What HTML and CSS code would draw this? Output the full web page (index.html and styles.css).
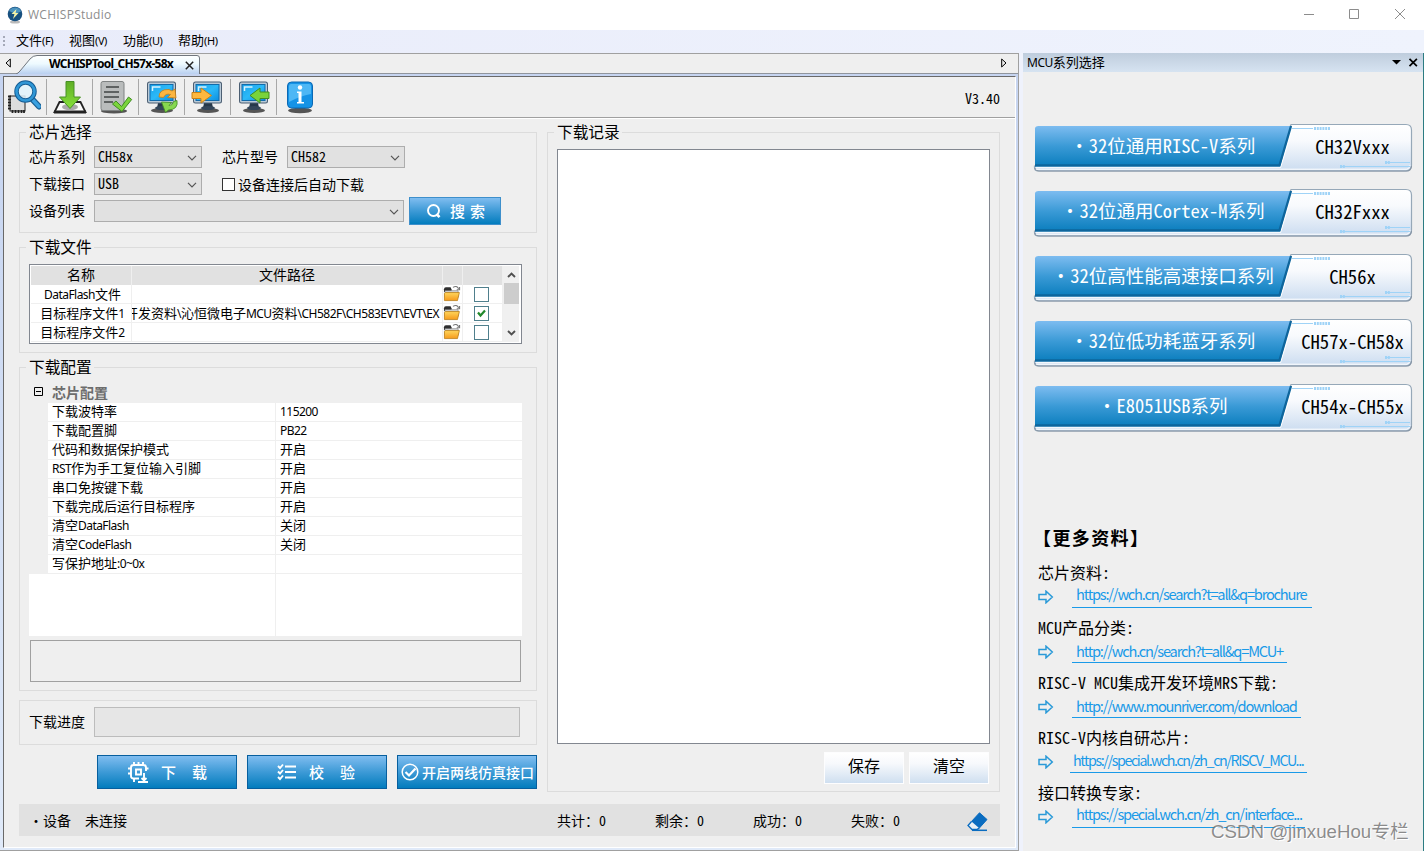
FILE: index.html
```html
<!DOCTYPE html>
<html lang="zh-CN">
<head>
<meta charset="utf-8">
<title>WCHISPStudio</title>
<link rel="stylesheet" href="styles.css">
</head>
<body>
<svg class="defs" width="0" height="0" aria-hidden="true">
  <defs>
    <linearGradient id="blue" x1="0" y1="0" x2="0" y2="1"><stop offset="0" stop-color="#7dbcf0"/><stop offset=".5" stop-color="#3a9ad6"/><stop offset="1" stop-color="#0a7dbd"/></linearGradient>
    <linearGradient id="plate" x1="0" y1="0" x2="0" y2="1"><stop offset="0" stop-color="#ffffff"/><stop offset=".35" stop-color="#f8fafd"/><stop offset="1" stop-color="#cbdcf0"/></linearGradient>
    <linearGradient id="screen" x1="0" y1="0" x2="1" y2="1"><stop offset="0" stop-color="#1aa3ea"/><stop offset=".5" stop-color="#2cb9f8"/><stop offset="1" stop-color="#0b8fe0"/></linearGradient>
    <linearGradient id="green" x1="0" y1="0" x2="0" y2="1"><stop offset="0" stop-color="#5fae25"/><stop offset="1" stop-color="#86e03a"/></linearGradient>
    <linearGradient id="tab" x1="0" y1="0" x2="0" y2="1"><stop offset="0" stop-color="#ffffff"/><stop offset=".45" stop-color="#edfaff"/><stop offset="1" stop-color="#b9d0f0"/></linearGradient>
    <linearGradient id="folder" x1="0" y1="0" x2="0" y2="1"><stop offset="0" stop-color="#ffd65c"/><stop offset="1" stop-color="#f59a1c"/></linearGradient>
    <symbol id="monitor" viewBox="0 0 34 34">
      <ellipse cx="17" cy="30.5" rx="11" ry="2.6" fill="#555"/>
      <path d="M13 23h8l1 5H12z" fill="#26384a"/>
      <ellipse cx="17" cy="28" rx="7" ry="2" fill="#34465a"/>
      <rect x="2" y="1.5" width="29" height="22" rx="2.5" fill="#4c5f73"/>
      <rect x="3" y="2.500" width="27" height="20" rx="1.500" fill="#b9cad8"/>
      <rect x="5" y="4.500" width="23" height="16" fill="url(#screen)" stroke="#126bab"/>
      <path d="M7.500 11V7h8" fill="none" stroke="#d8f4ff" stroke-width="1.500"/>
    </symbol>
    <symbol id="open" viewBox="0 0 19 18">
      <path d="M1 4.500q0-2 2-2h5l1 2v3H1z" fill="#2f2f2f"/>
      <path d="M2 6h14v7H2z" fill="#d5d5d5" stroke="#777" stroke-width=".6"/>
      <path d="M10.500 2.500q4-2.500 6 1.500M17.500 2v3h-3" fill="none" stroke="#777" stroke-width="1.200"/>
      <path d="M1.500 16.500V9l1-1h14.800l-2 8.500z" fill="url(#folder)" stroke="#b77a10" stroke-width=".8"/>
    </symbol>
    <symbol id="pill" viewBox="0 0 380 50">
      <path d="M258 1.500H373Q378.500 1.500 378.500 7V42Q378.500 48 373 48H5Q1.500 48 1.500 44.500V43H246z" fill="url(#plate)" stroke="#96a8b8" stroke-width="1.200"/>
      <path d="M1.500 45q2 3 4.500 3H373q5 0 5.500-5" fill="none" stroke="#8796a6" stroke-width="1.200"/>
      <path d="M3 46.200H374q3-1 3-4" fill="none" stroke="#fff" stroke-width="1"/>
      <path d="M3 44H247.500L260 3" fill="none" stroke="#fff" stroke-width="1.300"/>
      <path d="M2 5.500Q2 3 5.500 3H258.500L247 43.500H2z" fill="url(#blue)"/>
      <path d="M2 42.300H246.500L258 3" fill="none" stroke="#0e659c" stroke-width="2.300"/>
      <path d="M259 5.500H280M308 43.500H377M353 39.500H377" stroke="#9fd3f7" stroke-width="1"/>
      <path d="M281 5.500h16M307 43.500h5M352 39.500h5" stroke="#9fd3f7" stroke-width="3" stroke-dasharray="2 .8"/>
    </symbol>
    <symbol id="arrow" viewBox="0 0 16 14"><path d="M1 4.500H8V1.200L14.300 7 8 12.800V9.500H1z" fill="none" stroke="#2a9ad8" stroke-width="1.500"/></symbol>
    <symbol id="chev" viewBox="0 0 10 6"><path d="M1 .8 5 4.800 9 .8" fill="none" stroke="#555" stroke-width="1.200"/></symbol>
  </defs>
</svg>

<div class="window">
  <header class="titlebar">
    <svg class="appicon" viewBox="0 0 16 18"><ellipse cx="8" cy="16" rx="5" ry="1.500" fill="#bbb"/><circle cx="8" cy="8" r="7.300" fill="#17507f"/><path d="M2 5Q4 1 9 1.500q4 .5 5 4Q8 9 2 5z" fill="#4b93bf"/><path d="M9.500 3 4.500 8h3L6 13l5.500-6H8.500z" fill="#f4f3a8"/></svg>
    <span class="apptitle">WCHISPStudio</span>
    <svg class="winbtns" width="102" height="12" viewBox="0 0 102 12" fill="none" stroke="#8c8c8c"><path d="M0 5.500h10M45.500.5h9v9h-9zM91 0l10 10M101 0 91 10"/></svg>
  </header>

  <nav class="menubar">
    <i class="grip"></i>
    <span class="menu m1">文件<small>(F)</small></span>
    <span class="menu m2">视图<small>(V)</small></span>
    <span class="menu m3">功能<small>(U)</small></span>
    <span class="menu m4">帮助<small>(H)</small></span>
  </nav>

  <div class="work">
    <main class="dock">
      <div class="tabs">
        <svg class="tprev" width="6" height="10" viewBox="0 0 6 10"><path d="M5.300 1v8L1 5z" fill="none" stroke="#000"/></svg>
        <div class="tab">
          <svg class="tabshape" width="184" height="19" viewBox="0 0 184 19"><path d="M0 19Q2 18.500 4 16L14 4Q17 .5 21 .5H181Q183.500.5 183.500 3V19" fill="url(#tab)" stroke="#70767e"/></svg>
          <b>WCHISPTool_CH57x-58x</b>
          <svg class="tclose" width="9" height="9" viewBox="0 0 9 9"><path d="M.8.8l7.400 7.400M8.200.8.800 8.200" stroke="#222" stroke-width="1.500"/></svg>
        </div>
        <svg class="tnext" width="6" height="10" viewBox="0 0 6 10"><path d="M.7 1v8L5 5z" fill="none" stroke="#000"/></svg>
      </div>

      <div class="frame"><div class="page">
        <div class="toolbar">
          <span class="tool"><svg viewBox="0 0 34 34"><rect x="3" y="16" width="15" height="15" fill="#ddd" stroke="#222" stroke-width="1"/><path d="M1 16.500h3M1 19.500h3M1 22.500h3M1 25.500h3M1 28.500h3M5.500 30v3M8.500 30v3M11.500 30v3M14.500 30v3M17 30v3" stroke="#222" stroke-width="1.800"/><path d="M25 19l7 7.500" stroke="#1a5f93" stroke-width="6" stroke-linecap="round"/><path d="M25 19l7 7.500" stroke="#3aa0e0" stroke-width="3.500" stroke-linecap="round"/><circle cx="18.500" cy="11.500" r="9" fill="#dff3fb" fill-opacity=".85" stroke="#175e95" stroke-width="4.500"/><circle cx="18.500" cy="11.500" r="9" fill="none" stroke="#2f97d6" stroke-width="2.600"/></svg></span>
          <span class="tool"><svg viewBox="0 0 34 34"><path d="M6.500 22h21l5 10h-31z" fill="#fafafa" stroke="#222" stroke-width="1.800"/><path d="M1 30.500h32v3H1z" fill="#222"/><ellipse cx="17" cy="27" rx="8" ry="3.300" fill="#aaa"/><path d="M13 1.500h8V17h6.500L17 28.500 6.500 17H13z" fill="url(#green)" stroke="#479026"/></svg></span>
          <span class="tool"><svg viewBox="0 0 34 34"><ellipse cx="15" cy="31" rx="13" ry="2.500" fill="#555"/><rect x="2" y="1.500" width="23" height="29" rx="2" fill="#b9bcbc" stroke="#7e8282"/><path d="M7 7h13M5 12h15M5 17h15M5 22h9" stroke="#5e6262" stroke-width="1.800"/><path d="M13.500 24l3.500-3 5.500 5.500L29.500 17l3.200 2.500L23 31.500z" fill="#7bd43c" stroke="#3f8c22"/></svg></span>
          <span class="tool"><svg viewBox="0 0 34 34"><use href="#monitor"/><path d="M14 17q0-8 10-7.500l3 1.500 3-2 1 9-8.500-.5 3-3q-5-1.500-7 3z" fill="#fbb541" stroke="#c57d14" stroke-width=".8"/><path d="M32 20.500q1.500 9-8.500 9.500l-3 2.500-4-10.500 10 .5-2.500 3q4 0 4.500-4z" fill="#86d850" stroke="#3f8c22" stroke-width=".8"/></svg></span>
          <span class="tool"><svg viewBox="0 0 34 34"><use href="#monitor"/><path d="M1 12.500h9V8l10.500 7.500L10 23v-4.500H1z" fill="#fdb83f" stroke="#c98216"/></svg></span>
          <span class="tool"><svg viewBox="0 0 34 34"><use href="#monitor"/><path d="M32 12h-9V8l-10 7.500L23 23v-4.500h9z" fill="#79d33b" stroke="#3f8c22"/></svg></span>
          <span class="tool last"><svg viewBox="0 0 34 34"><ellipse cx="17" cy="30.500" rx="12" ry="2.800" fill="#555"/><rect x="4.500" y="2" width="25" height="26" rx="4" fill="#1593e6" stroke="#0b68b3"/><path d="M6 6q0-2 2-2h18q2 0 2 2v8Q17 16 6 22z" fill="#4db7f5"/><circle cx="17" cy="7.500" r="2.200" fill="#fff"/><path d="M14 11.500h4.500V22H21v1.500h-7V22h1.500v-9H14z" fill="#fff"/></svg></span>
          <span class="version hei">V3.40</span>
        </div>

        <div class="columns">
          <div class="left">
            <section class="group g-chip">
              <h2 class="legend">芯片选择</h2>
              <div class="formrow">
                <label class="hei">芯片系列</label><span class="select s1 hei">CH58x<svg><use href="#chev"/></svg></span>
                <label class="hei second">芯片型号</label><span class="select s2 hei">CH582<svg><use href="#chev"/></svg></span>
              </div>
              <div class="formrow">
                <label class="hei">下载接口</label><span class="select s1 hei">USB<svg><use href="#chev"/></svg></span>
                <i class="check"></i><span class="hei checktext">设备连接后自动下载</span>
              </div>
              <div class="formrow">
                <label class="hei">设备列表</label><span class="select s3"><svg><use href="#chev"/></svg></span>
                <button class="btn search"><svg width="16" height="16" viewBox="0 0 16 16" fill="none" stroke="#fff"><circle cx="7.500" cy="7.500" r="5.500" stroke-width="1.900"/><path d="M10.500 11l3 3.200" stroke-width="2.600"/></svg><span>搜 索</span></button>
              </div>
            </section>

            <section class="group g-file">
              <h2 class="legend">下载文件</h2>
              <div class="filebox">
                <div class="filegrid">
                  <div class="fr head"><span class="hei">名称</span><span class="hei">文件路径</span><span></span><span></span></div>
                  <div class="fr"><span class="name"><em class="df">DataFlash</em>文件</span><span></span><span><svg class="open"><use href="#open"/></svg></span><span><i class="cb"></i></span></div>
                  <div class="fr"><span class="name">目标程序文件<em>1</em></span><span class="path"><span class="pathtext">开发资料<em>\</em>沁恒微电子<em>MCU</em>资料<em class="tail">\CH582F\CH583EVT\EVT\EX</em></span></span><span><svg class="open"><use href="#open"/></svg></span><span><i class="cb"><svg width="9" height="9" viewBox="0 0 9 9"><path d="M1 3.500 3.500 6.500 8 1.500" fill="none" stroke="#22892c" stroke-width="2.200"/></svg></i></span></div>
                  <div class="fr"><span class="name">目标程序文件<em>2</em></span><span></span><span><svg class="open"><use href="#open"/></svg></span><span><i class="cb"></i></span></div>
                </div>
                <div class="scroll"><svg width="9" height="6" viewBox="0 0 9 6"><path d="M1 5 4.500 1.500 8 5" fill="none" stroke="#505050" stroke-width="1.900"/></svg><i></i><svg width="9" height="6" viewBox="0 0 9 6"><path d="M1 1 4.500 4.500 8 1" fill="none" stroke="#505050" stroke-width="1.900"/></svg></div>
              </div>
            </section>

            <section class="group g-conf">
              <h2 class="legend">下载配置</h2>
              <div class="props">
                <div class="cat"><svg width="9" height="9" viewBox="0 0 9 9"><path d="M.5.5h8v8h-8zM2 4.500h5" fill="none" stroke="#000"/></svg><b>芯片配置</b></div>
                <div class="prop"><span>下载波特率</span><span><em>115200</em></span></div>
                <div class="prop"><span>下载配置脚</span><span><em>PB22</em></span></div>
                <div class="prop"><span>代码和数据保护模式</span><span>开启</span></div>
                <div class="prop"><span><em>RST</em>作为手工复位输入引脚</span><span>开启</span></div>
                <div class="prop"><span>串口免按键下载</span><span>开启</span></div>
                <div class="prop"><span>下载完成后运行目标程序</span><span>开启</span></div>
                <div class="prop"><span>清空<em>DataFlash</em></span><span>关闭</span></div>
                <div class="prop"><span>清空<em>CodeFlash</em></span><span>关闭</span></div>
                <div class="prop"><span>写保护地址<em>:0~0x</em></span><span></span></div>
                <div class="propblank"></div>
              </div>
              <div class="desc"></div>
            </section>

            <section class="group g-prog"><label class="hei">下载进度</label><div class="progress"></div></section>

            <div class="actions">
              <button class="btn a1"><svg width="22" height="22" viewBox="0 0 22 22" fill="none" stroke="#fff" stroke-width="1.900"><path d="M19 10V6.500q0-2.500-2.500-2.500h-10Q4 4 4 6.500v8.500Q4 17.500 6.500 17.500H12M7 4V1M11.500 4V1M16 4V1M4 7.500H1M4 12.500H1M19 7.500h2.500M7 18v3M11 21h10M17 12v8M14.500 17l2.500 2.500 2.500-2.500M9 8.500h5v5H9z"/></svg><span>下<u></u>载</span></button>
              <button class="btn a2"><svg width="20" height="18" viewBox="0 0 20 18" fill="none" stroke="#fff" stroke-width="1.900"><path d="M8 3.500h11M8 9h11M8 14.500h11M1 3l2 2 3-3.500M1 8.500l2 2L6 7M1 14l2 2 3-3.500"/></svg><span>校<u></u>验</span></button>
              <button class="btn a3"><svg width="18" height="18" viewBox="0 0 18 18" fill="none" stroke="#fff"><circle cx="9" cy="9" r="7.800" stroke-width="1.500"/><path d="M4.500 9l3.500 3.500 6.500-7" stroke-width="2.200"/></svg><span>开启两线仿真接口</span></button>
            </div>
          </div>

          <section class="group g-log">
            <h2 class="legend">下载记录</h2>
            <div class="log"></div>
            <div class="logbtns"><button>保存</button><button>清空</button></div>
          </section>
        </div>

        <footer class="status hei">
          <span class="dot">·</span><span class="dev">设备</span><span class="conn">未连接</span>
          <span class="cnt">共计：0</span><span class="cnt">剩余：0</span><span class="cnt">成功：0</span><span class="cnt">失败：0</span>
          <svg class="eraser" width="21" height="20" viewBox="0 0 21 20"><path d="M12.500.8 20 7.500 11.500 17 4 10z" fill="#0a6cc0" stroke="#0a6cc0" stroke-linejoin="round"/><path d="M4.500 9.500 1 13.500l4 4h5l2-1.500" fill="#e8f0f6" stroke="#0a6cc0" stroke-width="1.300"/><path d="M5 18.300h15" stroke="#0a6cc0" stroke-width="1.500"/></svg>
        </footer>
      </div></div>
    </main>

    <aside class="side">
      <div class="sidehead"><span><em>MCU</em>系列选择</span><svg width="26" height="9" viewBox="0 0 26 9"><path d="M0 2h9L4.500 6.500z"/><path d="M17.500.8l7.400 7.400M24.900.8l-7.400 7.400" stroke="#000" stroke-width="1.700"/></svg></div>
      <div class="pills hei">
        <a class="pill"><svg><use href="#pill"/></svg><span><i>·</i>32位通用RISC-V系列</span><b>CH32Vxxx</b></a>
        <a class="pill"><svg><use href="#pill"/></svg><span><i>·</i>32位通用Cortex-M系列</span><b>CH32Fxxx</b></a>
        <a class="pill"><svg><use href="#pill"/></svg><span><i>·</i>32位高性能高速接口系列</span><b>CH56x</b></a>
        <a class="pill"><svg><use href="#pill"/></svg><span><i>·</i>32位低功耗蓝牙系列</span><b>CH57x-CH58x</b></a>
        <a class="pill"><svg><use href="#pill"/></svg><span><i>·</i>E8051USB系列</span><b>CH54x-CH55x</b></a>
      </div>
      <h3 class="moretitle">【更多资料】</h3>
      <div class="more">
        <div class="item"><p class="hei">芯片资料:</p><div class="linkrow"><svg><use href="#arrow"/></svg><a class="l1">https://wch.cn/search?t=all&amp;q=brochure</a></div></div>
        <div class="item"><p class="hei">MCU产品分类:</p><div class="linkrow"><svg><use href="#arrow"/></svg><a class="l2">http://wch.cn/search?t=all&amp;q=MCU+</a></div></div>
        <div class="item"><p class="hei">RISC-V MCU集成开发环境MRS下载:</p><div class="linkrow"><svg><use href="#arrow"/></svg><a class="l3">http://www.mounriver.com/download</a></div></div>
        <div class="item"><p class="hei">RISC-V内核自研芯片:</p><div class="linkrow"><svg><use href="#arrow"/></svg><a class="l4">https://special.wch.cn/zh_cn/RISCV_MCU...</a></div></div>
        <div class="item"><p class="hei">接口转换专家:</p><div class="linkrow"><svg><use href="#arrow"/></svg><a class="l5">https://special.wch.cn/zh_cn/interface...</a></div></div>
      </div>
    </aside>
    <div class="edge"></div>
  </div>
  <div class="mark">CSDN @jinxueHou专栏</div>
</div>
</body>
</html>
```

FILE: styles.css
```css
* { box-sizing: border-box; }
body { margin: 0; font: 13px/18px "Noto Sans CJK SC", sans-serif; color: #000; }
h2, h3, p { margin: 0; font-weight: normal; }
svg { display: block; flex: none; }
.defs { position: absolute; }
i { display: block; }
em { font: 12px/15px "Noto Sans", sans-serif; letter-spacing: -.55px; }
button { font: inherit; padding: 0; margin: 0; border: 0; }

/* Half-width Latin letters beside full-width ideographs */
.hei { font-family: "Noto Sans CJK SC", sans-serif; font-size: 14px; font-feature-settings: "hwid"; }

.window { position: relative; width: 1424px; height: 851px; overflow: hidden; background: #efefef; }
.titlebar { display: flex; height: 30px; padding: 6px 18px 0 7px; background: #fff; }
.appicon { width: 16px; height: 18px; }
.apptitle { margin-left: 5px; font: 12px/18px "Open Sans", sans-serif; color: #8d8d8d; letter-spacing: .25px; }
.winbtns { margin: 3px 0 0 auto; }

.menubar { display: flex; height: 23px; padding-left: 3px; background: linear-gradient(90deg, #e9ecfa, #eff3fd); line-height: 19px; }
.grip { width: 2px; height: 11px; margin: 6px 11px 0 0; background: repeating-linear-gradient(#a5a9b8 0 2px, transparent 2px 4px); }
.menu { width: 54px; white-space: nowrap; }
.m1 { width: 53px; }
.m3 { width: 55px; }
.menu small { font: 11px/19px "Noto Sans", sans-serif; letter-spacing: -.4px; }

.work { display: flex; height: 798px; background: #eff2fc; }
.dock { width: 1019px; border: 1px solid #a0a0a0; border-left: 0; display: flex; flex-direction: column; }
.tabs { display: flex; height: 20px; border-bottom: 1px solid #90959d; background: #efefef; }
.tprev { margin: 4px 0 0 5px; }
.tab { position: relative; display: flex; width: 184px; height: 19px; margin: 1px 0 0 5px; }
.tabshape { position: absolute; left: 0; top: 0; }
.tab b { position: relative; margin-left: 33px; font: bold 12px/18px "Noto Sans", sans-serif; letter-spacing: -.74px; width: 130px; white-space: nowrap; }
.tclose { position: relative; margin: 6px 0 0 6px; }
.tnext { margin: 4px 11px 0 auto; }
.frame { flex: 1; padding: 2px 2px 2px 3px; background: linear-gradient(#c6d4f0, #e0eaf9); }
.page { height: 772px; background: #efefef; border: 1px solid; border-color: #696969 #fff #fff #696969; display: flex; flex-direction: column; }
.toolbar { display: flex; height: 41px; border-bottom: 1px solid #a0a0a0; padding-left: 2px; }
.tool { width: 46px; height: 36px; margin-top: 2px; padding: 1px 0 0 1px; position: relative; }
.tool:not(.last) { box-shadow: inset -5px 0 #efefef, inset -6px 0 #a8a8a8; }
.tool svg { width: 34px; height: 34px; }
.version { margin: 12px 15px 0 auto; line-height: 18px; }

.columns { display: flex; gap: 10px; padding: 13px 15px 0; border-top: 1px solid #fff; }
.left { width: 518px; }
.group { border: 1px solid #dcdcdc; padding-left: 9px; }
.legend { width: max-content; height: 16px; margin: -9px 0 0 -3px; padding: 0 2px 0 3px; background: #efefef; font: 15.7px/16px "Noto Sans CJK SC", sans-serif; }
.g-chip { height: 101px; }
.formrow { display: flex; align-items: center; height: 22px; margin-bottom: 5px; }
.g-chip .legend { margin-bottom: 6px; }
.formrow label { width: 65px; padding-bottom: 2px; }
.formrow .second { margin-left: 20px; }
.select { display: flex; align-items: center; justify-content: space-between; height: 22px; padding: 0 4px 2px 3px; border: 1px solid #adadad; background: #e1e1e1; }
.select svg { width: 10px; height: 6px; margin-left: auto; margin-top: 3px; }
.s1 { width: 108px; }
.s2 { width: 118px; }
.s3 { width: 310px; }
.check { width: 13px; height: 13px; margin: 0 3px 0 20px; border: 1px solid #333; background: #fff; }
.btn { display: flex; align-items: center; border: 1px solid #075f9e; background: linear-gradient(#80bdf0, #3d9ad6 50%, #027cbd); color: #fff; font-size: 16px; font-weight: 500; white-space: nowrap; }
.search { width: 92px; height: 28px; margin-left: 5px; padding-left: 16px; border-color: #3d8fcb; flex: none; font-size: 15px; word-spacing: 1.5px; }
.search svg { margin-right: 8px; }

.g-file { height: 106px; margin-top: 14px; }
.g-file .legend { margin-bottom: 9px; }
.filebox { display: flex; width: 493px; height: 80px; padding: 1px; border: 1px solid #828790; background: #fff; }
.filegrid { width: 472px; }
.fr { display: grid; grid-template-columns: 101px 311px 20px 40px; height: 19px; border-bottom: 1px solid #efefef; text-align: center; line-height: 17px; }
.fr > span { border-right: 1px solid #efefef; height: 18px; white-space: nowrap; }
.fr > .name { padding-left: 3px; }
.fr.head { background: #e1e1e1; border-bottom-color: #e1e1e1; }
.fr.head > span { height: 19px; }
.fr > .path { overflow: hidden; text-align: left; }
.pathtext { margin-left: -7px; }
.tail { letter-spacing: -.5px; }
.open { width: 18px; height: 17px; }
.cb { display: flex; align-items: center; justify-content: center; width: 15px; height: 15px; margin: 2px auto 0 11px; border: 1px solid #4f7f8c; background: #fff; }
.scroll { display: flex; flex-direction: column; align-items: center; width: 16px; height: 76px; padding: 6px 0; background: #f0f0f0; }
.scroll i { width: 15px; height: 21px; margin: 5px 0 auto; background: #cdcdcd; }

.g-conf { height: 324px; margin-top: 14px; }
.g-conf .legend { margin-bottom: 8px; }
.props { width: 493px; }
.cat { display: flex; align-items: center; height: 20px; padding: 0 0 3px 5px; color: #6d6d6d; }
.cat b { margin-left: 9px; font-size: 14px; }
.prop { display: grid; grid-template-columns: 228px 1fr; height: 19px; margin-left: 19px; border-bottom: 1px solid #efefef; background: #fff; line-height: 15px; }
.prop > span { height: 18px; padding-left: 4px; white-space: nowrap; }
.prop > span:first-child { border-right: 1px solid #efefef; }
.propblank { height: 62px; background: linear-gradient(90deg, #fff 246px, #efefef 246px 247px, #fff 247px); }
.desc { width: 491px; height: 42px; margin: 4px 0 0 1px; border: 1px solid #a0a0a0; }

.g-prog { display: flex; align-items: center; height: 45px; margin-top: 9px; }
.g-prog label { width: 65px; padding-bottom: 3px; }
.progress { width: 426px; height: 30px; margin-bottom: 1px; background: #e6e6e6; border: 1px solid #bcbcbc; }
.actions { display: flex; gap: 10px; margin: 10px 0 0 78px; }
.actions .btn { width: 140px; height: 34px; }
.a1 { padding-left: 29px; }
.a1 span, .a2 span { margin-left: 12px; font-size: 15px; }
.actions u { display: inline-block; width: 16px; }
.a2 { padding-left: 29px; }
.a3 { padding-left: 3px; }
.a3 span { margin-left: 3px; font-size: 14px; }

.g-log { width: 453px; height: 660px; }
.g-log .legend { margin-bottom: 9px; }
.log { width: 433px; height: 595px; background: #fff; border: 1px solid #828790; }
.logbtns { display: flex; gap: 5px; margin: 8px 0 0 267px; }
.logbtns button { width: 80px; height: 32px; border: 1px solid #fdfdfe; background: linear-gradient(#fff, #f7f9fc 35%, #cfdff0); font-size: 16px; line-height: 25px; padding-bottom: 5px; }

.status { display: flex; align-items: center; width: 981px; height: 32px; margin: 12px 0 0 15px; background: #e1e1e1; }
.dot { width: 24px; padding-left: 10px; }
.dev { width: 42px; }
.conn { width: 472px; }
.cnt { width: 98px; }
.eraser { margin: 3px 0 0 18px; }

.side { width: 400px; margin-left: 4px; background: #efefef; }
.sidehead { display: flex; align-items: center; justify-content: space-between; height: 19px; padding: 0 5px 1px 4px; background: linear-gradient(#bfcddd, #d6e3f1); }
.sidehead em { letter-spacing: -.5px; }
.pills { display: flex; flex-direction: column; gap: 15px; padding: 51px 0 0 10px; }
.pill { position: relative; display: grid; grid-template-columns: 260px 119px; width: 380px; height: 50px; font-size: 18.5px; line-height: 44px; text-align: center; }
.pill svg { position: absolute; left: 0; top: 0; width: 380px; height: 50px; }
.pill span { position: relative; padding-left: 4px; color: #fff; white-space: nowrap; }
.pill i { display: inline-block; width: 14px; text-indent: -5px; font-style: normal; }
.pill b { position: relative; font-weight: normal; font-size: 18.67px; line-height: 46px; white-space: nowrap; }
.moretitle { margin: 90px 0 0 10px; font: bold 18px/28px "Noto Sans CJK SC", sans-serif; letter-spacing: 1.4px; }
.more { padding: 11px 0 0 15px; }
.item { height: 55px; }
.item p { height: 23px; font-size: 16px; line-height: 20px; white-space: nowrap; }
.linkrow { display: flex; }
.linkrow svg { width: 16px; height: 14px; margin: 5px 18px 0 0; }
.linkrow a { height: 23px; padding-left: 4px; border-bottom: 1px solid #1a9ae8; color: #1a9ae8; font-size: 14.67px; line-height: 19px; letter-spacing: -1.22px; white-space: nowrap; }
.linkrow .l1 { width: 240px; line-height: 18px; }
.linkrow .l2 { width: 215px; line-height: 22px; }
.linkrow .l3 { width: 229px; line-height: 22px; }
.linkrow .l4 { width: 237px; margin-left: -2px; padding-left: 3px; line-height: 20px; font-size: 14.3px; letter-spacing: -1.4px; }
.linkrow .l5 { width: 233px; line-height: 18px; }
.edge { width: 1px; background: #2c7c82; }
.mark { position: absolute; left: 1211px; top: 820px; font: 18.7px/24px "Liberation Sans", "Noto Sans CJK SC", sans-serif; color: rgba(120, 120, 120, .85); text-shadow: 1px 1px 0 #fff; white-space: nowrap; }
```
